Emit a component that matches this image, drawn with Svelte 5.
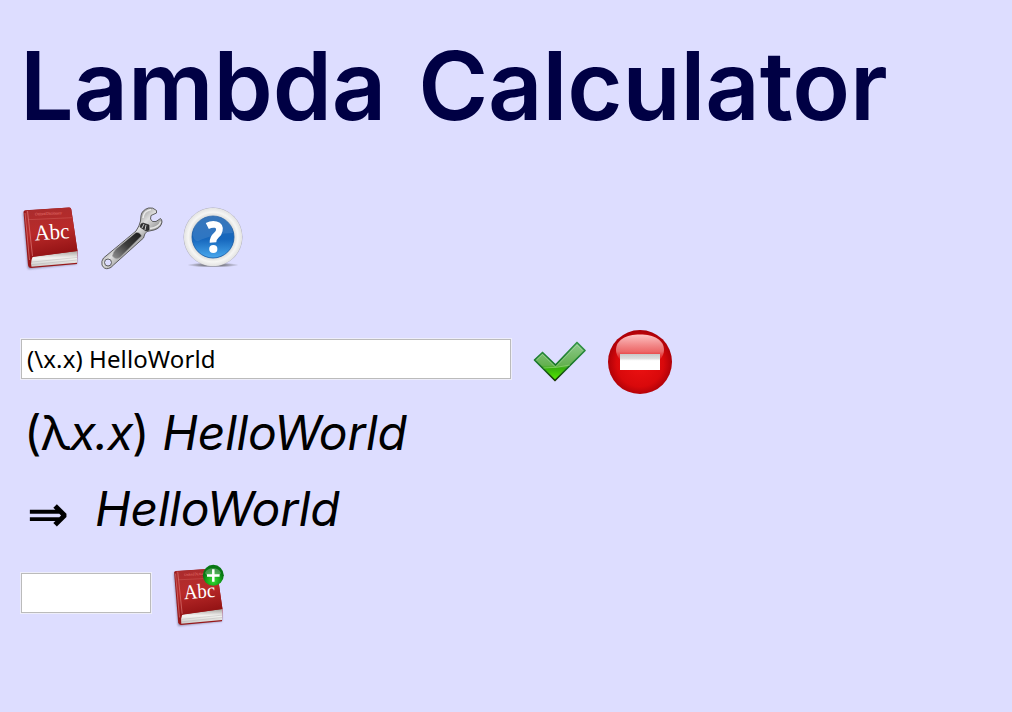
<script>
  let expression = $state('(\\x.x) HelloWorld');
  let name = $state('');
</script>

{#snippet book(id)}
  <defs>
    <linearGradient id="{id}-cover" x1="0" y1="0" x2="0.2" y2="1">
      <stop offset="0" stop-color="#a82c2e" />
      <stop offset="0.5" stop-color="#b92a29" />
      <stop offset="1" stop-color="#8f1012" />
    </linearGradient>
    <linearGradient id="{id}-pages" x1="0" y1="0" x2="0" y2="1">
      <stop offset="0" stop-color="#a9a5a0" />
      <stop offset="0.45" stop-color="#f4f4f2" />
      <stop offset="1" stop-color="#c9c9c6" />
    </linearGradient>
    <filter id="{id}-shadow" x="-20%" y="-20%" width="140%" height="140%">
      <feGaussianBlur stdDeviation="1" />
    </filter>
  </defs>
  <path d="M3 6 8 63 57 58 56 48Z" fill="#55506f" opacity=".6" filter="url(#{id}-shadow)" />
  <path d="M3.500 6Q3.500 4.500 5.500 4.300L49 1.500Q51 1.500 51.300 3.500L57.500 45 57 58 11 62Q8.500 62 8 59Z" fill="#981719" />
  <path d="M12.500 51 57 45V56.800L11.500 60.800Q10.500 56 12.500 51Z" fill="url(#{id}-pages)" />
  <path d="M12 56 57 51.500M12 58.600 57 54" stroke="#b7b5b3" stroke-width=".5" />
  <path d="M5.500 4.500 49.500 1.500Q51 1.500 51.300 3.500L57.500 45 14 50.500Q10 51.500 9 56Z" fill="url(#{id}-cover)" />
  <path d="M5 7 9.500 54M7.500 5 12.500 50" stroke="#e28482" stroke-width=".8" fill="none" opacity=".8" />
  <path d="M8 13.700 52 11.700" stroke="#df7770" stroke-width=".5" opacity=".7" />
  <text x="15" y="9.500" transform="rotate(-3 15 11)" class="tiny" textLength="27">Oxford Dictionary</text>
  <text x="15" y="34.500" transform="rotate(-4 14 36)" class="abc" textLength="35" lengthAdjust="spacingAndGlyphs">Abc</text>
{/snippet}

<main>
  <h1>Lambda Calculator</h1>

  <nav>
    <button aria-label="Dictionary">
      <svg class="book" width="60" height="66" viewBox="0 0 60 66">{@render book('dictionary')}</svg>
    </button>
    <button aria-label="Settings">
      <svg class="wrench" width="66" height="66" viewBox="0 0 66 66">
        <defs>
          <linearGradient id="steel" x1="0" y1="0" x2="1" y2="1">
            <stop offset="0" stop-color="#888" />
            <stop offset=".35" stop-color="#999" />
            <stop offset=".48" stop-color="#e0e0e0" />
            <stop offset=".6" stop-color="#a5a5a5" />
            <stop offset="1" stop-color="#4b4b4b" />
          </linearGradient>
          <linearGradient id="grip" x1="1" y1="0" x2="0" y2="1">
            <stop offset="0" stop-color="#1c1c1c" />
            <stop offset=".5" stop-color="#3c3c3c" />
            <stop offset="1" stop-color="#929292" />
          </linearGradient>
        </defs>
        <path fill-rule="evenodd" d="M56.500 4.500Q53 1 48.500 2Q42 4 41 9.500L40.500 15Q39.500 20 36 25L3.500 52Q1 55 2 59Q4 63.500 8.500 62.500Q11 62 13.500 59L43.500 32Q44.500 27 47 25.500L54 24Q61 22 62 16Q62 13.500 60.500 12.500L56 15.500 52.500 15.500 50.500 13 51 9.500 56.500 7ZM8 53A3.500 3.500 0 1 1 8 60A3.500 3.500 0 1 1 8 53Z" fill="url(#steel)" stroke="#505050" stroke-width=".9" />
        <path d="M36 26.500Q40 26 41.500 30L20 51.500Q15 54 12.500 50Q13 46 16 43Z" fill="url(#grip)" stroke="#999" stroke-width=".6" />
        <path d="m41 18 2-1 6 2v5l-3 1-6-4Z" fill="#333" stroke="#222" stroke-width=".6" />
        <path d="m42 22 2-4m1 6 1-5" stroke="#c9c9c9" stroke-width="1" />
        <path d="M43 12Q43.500 5 51 3.600M50 22.500Q59 21.500 60.700 15.500" fill="none" stroke="#fff" stroke-width="1.500" opacity=".7" />
      </svg>
    </button>
    <button aria-label="Help">
      <svg class="help" width="66" height="66" viewBox="0 0 66 66">
        <defs>
          <radialGradient id="ring">
            <stop offset=".68" stop-color="#d6d6d3" />
            <stop offset=".84" stop-color="#f6f6f4" />
            <stop offset=".97" stop-color="#e5e5e4" />
            <stop offset="1" stop-color="#aaaab5" />
          </radialGradient>
          <linearGradient id="blue" x1="0" y1="0" x2="0" y2="1">
            <stop offset="0" stop-color="#2267b3" />
            <stop offset=".55" stop-color="#1667bd" />
            <stop offset="1" stop-color="#49a8ed" />
          </linearGradient>
          <radialGradient id="ground">
            <stop offset=".4" stop-color="#555" stop-opacity=".7" />
            <stop offset="1" stop-color="#555" stop-opacity="0" />
          </radialGradient>
        </defs>
        <ellipse cx="33" cy="59" rx="26" ry="2.500" fill="url(#ground)" />
        <circle cx="33" cy="31" r="29.500" fill="url(#ring)" />
        <circle cx="33" cy="31" r="21" fill="url(#blue)" stroke="#1458a4" stroke-width=".8" />
        <path d="M13 30A20 20 0 0 1 53 27C42 27 29 30 18 35Q14 35 13 30Z" fill="#fff" opacity=".1" />
        <path d="M27.300 20C33 17 40.500 18 39.300 24.500C38.500 30 32.700 29 33 36.500" fill="none" stroke="#fff" stroke-width="6.600" />
        <circle cx="33.300" cy="43" r="4.100" fill="#fff" />
      </svg>
    </button>
  </nav>

  <form onsubmit={(e) => e.preventDefault()}>
    <input class="expression" aria-label="Expression" bind:value={expression} />
    <button class="accept" aria-label="Evaluate">
      <svg width="54" height="42" viewBox="0 0 54 42">
        <defs>
          <linearGradient id="check" x1="0" y1="0" x2="0" y2="1">
            <stop offset="0" stop-color="#8dca8c" />
            <stop offset=".6" stop-color="#64b04f" />
            <stop offset=".68" stop-color="#37b00d" />
            <stop offset="1" stop-color="#58ed00" />
          </linearGradient>
          <linearGradient id="edge" x1="0" y1="0" x2="0" y2="1">
            <stop offset="0" stop-color="#349548" />
            <stop offset=".6" stop-color="#157427" />
            <stop offset="1" stop-color="#173500" />
          </linearGradient>
        </defs>
        <path d="M1.500 19 9.500 11.500 22.500 24 44 1.500 52 9.500 22 39.500Z" fill="url(#check)" stroke="url(#edge)" stroke-width="1.700" stroke-linejoin="round" />
        <path d="m3.500 19 6-5.500 13 12.500L44 4l5.500 5.500" fill="none" stroke="#bce0b8" stroke-width=".8" opacity=".5" />
        <path d="M10.500 27Q24 27 37 24" fill="none" stroke="#9adc7d" stroke-width=".6" />
      </svg>
    </button>
    <button type="button" aria-label="Clear">
      <svg width="64" height="64" viewBox="0 0 64 64">
        <defs>
          <radialGradient id="red" cx=".5" cy=".52" r=".52">
            <stop offset="0" stop-color="#ee1212" />
            <stop offset=".7" stop-color="#d9090b" />
            <stop offset="1" stop-color="#a90008" />
          </radialGradient>
          <linearGradient id="gloss" x1="0" y1="0" x2="0" y2="1">
            <stop offset="0" stop-color="#ffc5c5" />
            <stop offset=".6" stop-color="#f08080" stop-opacity=".8" />
            <stop offset="1" stop-color="#e93030" stop-opacity=".15" />
          </linearGradient>
          <linearGradient id="bar" x1="0" y1="0" x2="0" y2="1">
            <stop offset="0" stop-color="#c8c8c8" />
            <stop offset=".28" stop-color="#dedede" />
            <stop offset=".42" stop-color="#fff" />
          </linearGradient>
        </defs>
        <circle cx="32" cy="32" r="32" fill="url(#red)" />
        <path d="M8 20C8 10 18 4.500 32 4.500S56 10 56 20C56 27 50 33 43 33H21C14 33 8 27 8 20Z" fill="url(#gloss)" />
        <path d="M12 24h40v16H12Z" fill="url(#bar)" />
      </svg>
    </button>
  </form>

  <section>
    <p class="source"><span>(λ<i>x.x</i>)</span><i>HelloWorld</i></p>
    <p class="result"><span>⇒</span><i>HelloWorld</i></p>
  </section>

  <footer>
    <input class="name" aria-label="Name" bind:value={name} />
    <button aria-label="Add to dictionary">
      <svg width="56" height="64" viewBox="0 0 56 64">
        <defs>
          <radialGradient id="plus" cx=".5" cy=".75">
            <stop offset="0" stop-color="#39df35" />
            <stop offset=".65" stop-color="#14a51a" />
            <stop offset="1" stop-color="#087714" />
          </radialGradient>
        </defs>
        <g transform="translate(0 3) scale(.895 .935)">{@render book('add')}</g>
        <circle cx="42.300" cy="11.300" r="10.500" fill="url(#plus)" />
        <path d="M34 9A8.500 7 0 0 1 50 9Q48 13 42 13T34 9Z" fill="#fff" opacity=".25" />
        <path d="M42.300 5.300v12.400M36 11.500h12.600" stroke="#fff" stroke-width="2.500" />
      </svg>
    </button>
  </footer>
</main>

<style>
  :global(body) {
    margin: 0;
    background: #ddf;
  }

  main {
    box-sizing: border-box;
    height: 712px;
    padding: 30px 20px 0;
    overflow: hidden;
    color: #000;
    font-family: Inter, "Liberation Sans", sans-serif;
  }

  h1 {
    margin: 0;
    height: 170px;
    color: #004;
    font-size: 95px;
    line-height: 112px;
    font-weight: 600;
    letter-spacing: -0.1px;
    word-spacing: 8px;
    white-space: nowrap;
  }

  button {
    display: block;
    padding: 0;
    border: 0;
    background: none;
  }

  svg {
    display: block;
  }

  nav {
    display: flex;
    align-items: flex-start;
    height: 130px;
    padding-top: 6px;
    box-sizing: border-box;
  }

  .book {
    margin-right: 20px;
  }

  .wrench {
    margin-right: 14px;
  }

  form {
    display: flex;
    align-items: center;
    height: 64px;
  }

  input {
    box-sizing: border-box;
    height: 42px;
    margin: 0 0 6px;
    padding: 0 4px 2px 5px;
    border: 2px solid #eeeefa;
    outline: 1px solid #bbb;
    outline-offset: -2px;
    border-radius: 0;
    background: #fff;
    color: #000;
    font: 24px "Noto Sans", sans-serif;
    letter-spacing: 0.1px;
  }

  .expression {
    width: 492px;
    margin-right: 21px;
  }

  .accept {
    margin-right: 21px;
  }

  p {
    display: flex;
    align-items: baseline;
    height: 76px;
    margin: 0;
    padding-left: 6px;
    font-size: 48px;
    line-height: 76px;
    letter-spacing: -0.2px;
  }

  .source {
    gap: 14px;
    padding-left: 4px;
  }

  .source span {
    letter-spacing: -1.3px;
  }

  section {
    height: 170px;
    padding-top: 1px;
    box-sizing: border-box;
  }

  .result span {
    position: relative;
    top: 5px;
    left: 1px;
    width: 69px;
    font: bold 50px "DejaVu Sans", sans-serif;
    line-height: 70px;
  }

  footer {
    display: flex;
    align-items: center;
    height: 64px;
  }

  .name {
    width: 132px;
    margin-right: 19px;
  }

  .abc {
    fill: #fff;
    font: 22px "Liberation Serif", serif;
  }

  .tiny {
    fill: #e77a75;
    font: 4px "Liberation Serif", serif;
  }
</style>
